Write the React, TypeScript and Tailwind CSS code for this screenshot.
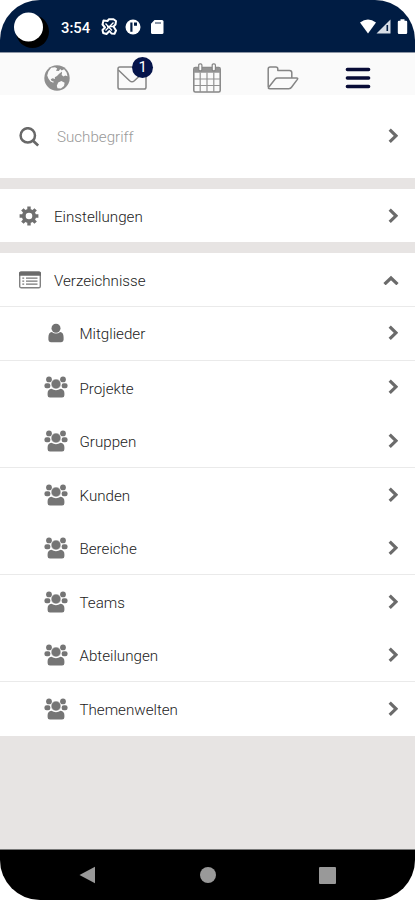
import React from "react";

type IconProps = { className?: string };

const ChevronRight = () => (
  <svg className="h-4 w-[10px] shrink-0" viewBox="0 0 10 16" fill="none" stroke="#6b6b6b" strokeWidth="3.200">
    <path d="M1.700 1.700 8 7.800l-6.300 6.100" />
  </svg>
);

const ChevronUp = () => (
  <svg className="h-[10px] w-4 shrink-0" viewBox="0 0 16 10" fill="none" stroke="#6b6b6b" strokeWidth="3.200">
    <path d="M1.500 9.200 8 3l6.500 6.200" />
  </svg>
);

const SearchIcon = ({ className }: IconProps) => (
  <svg className={className} width="20" height="20" viewBox="0 0 20 20" fill="none" stroke="#686868" strokeWidth="2.500">
    <circle cx="8.800" cy="8.400" r="7.200" />
    <path d="m13.800 13.400 5.400 5.200" strokeWidth="2.800" />
  </svg>
);

const GearIcon = ({ className }: IconProps) => (
  <svg className={className} width="20" height="20" viewBox="-10 -10 20 20" fill="none" stroke="#6f6f6f">
    <circle r="5.200" strokeWidth="3.800" />
    {[0, 45, 90, 135].map((angle) => (
      <path key={angle} d="M0-9.400v3.400M0 6v3.400" strokeWidth="3.400" transform={`rotate(${angle})`} />
    ))}
  </svg>
);

const ListIcon = ({ className }: IconProps) => (
  <svg className={className} width="22" height="18" viewBox="0 0 22 18">
    <rect x=".7" y="1.200" width="20.600" height="15.600" rx="1.600" fill="#fff" stroke="#818181" strokeWidth="1.400" />
    <path d="M0 4.700V2Q0 .5 1.500.5h19Q22 .5 22 2v2.700z" fill="#6a6a6a" />
    <path d="M3.300 7.200h1.900M3.300 10.200h1.900M3.300 13.200h1.900M7 7.200h11.500M7 10.200h11.500M7 13.200h11.500" stroke="#777" strokeWidth="1.300" />
  </svg>
);

const UserIcon = ({ className }: IconProps) => (
  <svg className={className} width="16" height="20" viewBox="0 0 16 20" fill="#727272">
    <circle cx="8" cy="5.300" r="4.500" />
    <path d="M3.800 9Q8 12.200 12.200 9 15.600 9.600 15.600 14.200v2.600q0 2.400-2.400 2.400H2.800Q.4 19.200.4 16.800v-2.600Q.4 9.600 3.800 9z" />
  </svg>
);

const GroupIcon = ({ className }: IconProps) => (
  <svg className={className} width="24" height="22" viewBox="0 0 24 22" fill="#757575">
    <circle cx="5" cy="3.400" r="2.900" />
    <circle cx="19" cy="3.400" r="2.900" />
    <rect x=".4" y="7.300" width="6" height="5" rx="2.200" />
    <rect x="17.600" y="7.300" width="6" height="5" rx="2.200" />
    <circle cx="12" cy="8" r="4.900" stroke="#fff" strokeWidth=".5" />
    <path d="M7.400 12.800Q12 15.500 16.600 12.800 20.400 13.500 20.400 17.300v2q0 2.300-2.300 2.300H5.900q-2.300 0-2.300-2.300v-2q0-3.800 3.800-4.500z" />
  </svg>
);

const GlobeIcon = () => (
  <svg className="block" width="26" height="26" viewBox="0 0 26 26">
    <circle cx="13" cy="13" r="12.700" fill="#8f8f8f" />
    <path
      d="M7.200 2.800 11 2.300l2.200 1.200-1.200 2.200 2.800.3 1.400-1.900 2.300 2.200-3.300 2.500-2.200 2.200-2.200 1.200.3 1.800-2.400-.7-2 1 1 1.800 2 .5-.4 1.200-2.800-1.400-2-2.700-1.300-3.100 1.200-4.200z"
      fill="#fafafa"
    />
    <path d="m17.500 5.500 2.600-1.200 2.500 3.100.9 3.800-2.300-.7-1.600 1-2-1.400.5-2.500z" fill="#fafafa" />
    <path d="m14.200 17.500 3.200-1.400 3.200 1.600-.6 3.400-3.100 2.400-3.400-.3-.7-2.500z" fill="#fafafa" />
  </svg>
);

const MailIcon = () => (
  <svg className="block" width="30" height="24" viewBox="0 0 30 24" fill="none" stroke="#858585" strokeWidth="1.500">
    <rect x="1" y="1" width="28" height="22" rx="1.800" />
    <path d="m1.300 4 11.300 10.700q2.400 2.200 4.800 0L28.700 4" />
  </svg>
);

const CalendarIcon = () => (
  <svg className="block" width="28" height="30" viewBox="0 0 28 30">
    <rect x=".8" y="4.500" width="26.400" height="24.500" rx="1.500" fill="#fafafa" stroke="#858585" strokeWidth="1.500" />
    <path d="M1 4.500h26v5.200H1z" fill="#949494" />
    <path d="M7.200 9.500V29M14 9.500V29M20.800 9.500V29M1 16h26M1 22.500h26" stroke="#929292" strokeWidth="1.200" />
    <g fill="#fafafa" stroke="#858585" strokeWidth="1.200">
      <rect x="5.700" y=".8" width="3.200" height="7" rx="1.300" />
      <rect x="19.200" y=".8" width="3.200" height="7" rx="1.300" />
    </g>
  </svg>
);

const FolderIcon = () => (
  <svg className="block" width="32" height="24" viewBox="0 0 32 24" fill="none" stroke="#858585" strokeWidth="1.500" strokeLinejoin="round">
    <path d="M1.200 21V3q0-2 2-2h5.600q2 0 2 2v1.500h11.700q2.300 0 2.300 2.300V12" />
    <path d="M1.500 21.500 8 13.200q1-1.200 2.700-1.200h19q1.600 0 .7 1.400L24.700 21q-1 1.700-2.900 1.700H3q-2.200 0-1.500-1.200z" />
  </svg>
);

const StatusBar = () => (
  <header className="flex h-[53px] items-start justify-between border-b border-[#8d96a5] bg-[#001c43]">
    <div className="flex items-start">
      <svg width="52" height="52" viewBox="0 0 52 52">
        <circle cx="32.500" cy="31.500" r="16.500" fill="#000" />
        <circle cx="28.500" cy="27" r="14.500" fill="#fff" />
      </svg>
      <span className="mt-[18px] ml-[9px] w-[40px] text-[14.800px] leading-5 font-medium whitespace-nowrap text-white">3:54</span>
      <svg className="mt-[18px]" width="64" height="18" viewBox="0 0 64 18">
        <path
          d="M2.500 2.500 6.500 3 8 1.200h4.500L15 3l-.5 3.500-2 2 2.500 4-1.500 3.300-3-.3-2-2.500-3 3L2.200 15l-.7-3L4 9.500 1.500 6.500z"
          fill="none"
          stroke="#fff"
          strokeWidth="2"
          strokeLinejoin="round"
        />
        <path d="m4.500 5.500 6.500 7M12.500 4.500l-8 8M6 8.500h6" stroke="#fff" strokeWidth="1.300" />
        <circle cx="32" cy="9" r="7.500" fill="#fff" />
        <path d="M29.300 4.500h2.200v9.200h-2.200zM33 4.500h3v3.300h-3z" fill="#001c43" />
        <path d="M53.500 2H61q1.500 0 1.500 1.500v11q0 1.500-1.500 1.500h-9.500Q50 16 50 14.500V5.700z" fill="#fff" />
        <path d="M54 5h6" stroke="#65738a" strokeWidth="1.500" />
      </svg>
    </div>
    <svg className="mt-[18px] mr-[6px]" width="50" height="18" viewBox="0 0 50 18">
      <path d="M1 4.500Q9 -1.700 17 4.500L9 15.500z" fill="#fff" />
      <path d="M31.500 1.500V15.500H17.500z" fill="#d8dde5" />
      <path d="M28.300 7v6" stroke="#001c43" strokeWidth="1.600" />
      <path d="M41.500 1.200h4v1.500H47q1.200 0 1.200 1.200v10.800q0 1.200-1.200 1.200h-7q-1.200 0-1.200-1.200V3.900q0-1.200 1.200-1.200h1.500z" fill="#fff" />
    </svg>
  </header>
);

const TabBar = () => (
  <nav className="grid h-[42px] grid-cols-5 items-center justify-items-center bg-[#fafafa] pt-[7px] pr-[19px] pl-[19px]">
    <GlobeIcon />
    <div className="relative pt-px">
      <MailIcon />
      <span className="absolute -top-[8px] left-[15px] flex h-[21px] w-[21px] items-center justify-center rounded-full bg-[#05144a] text-[15px] font-normal text-white">
        1
      </span>
    </div>
    <CalendarIcon />
    <FolderIcon />
    <svg className="block" width="26" height="22" viewBox="0 0 26 22" stroke="#070b36" strokeWidth="3.500" strokeLinecap="round">
      <path d="M2.400 2.500h21.200M2.400 11h21.200M2.400 19.500h21.200" />
    </svg>
  </nav>
);

const entries = [
  { label: "Mitglieder", icon: UserIcon, line: true },
  { label: "Projekte", icon: GroupIcon, line: false },
  { label: "Gruppen", icon: GroupIcon, line: true },
  { label: "Kunden", icon: GroupIcon, line: false },
  { label: "Bereiche", icon: GroupIcon, line: true },
  { label: "Teams", icon: GroupIcon, line: false },
  { label: "Abteilungen", icon: GroupIcon, line: true },
  { label: "Themenwelten", icon: GroupIcon, line: false },
];

export default function App() {
  return (
    <div className="h-[900px] w-full overflow-hidden bg-white font-['Roboto',sans-serif]">
      <div className="flex h-full flex-col overflow-hidden rounded-[40px] bg-[#e7e4e3] text-[15.150px] font-light text-[#222]">
        <StatusBar />
        <TabBar />

        {/* Search */}
        <div className="h-[83px] bg-white">
          <div className="flex h-[82px] items-center pr-[17px] pl-[19px]">
            <SearchIcon className="mt-[2px]" />
            <span className="flex-1 pt-[3px] pl-[18px] text-[#999]">Suchbegriff</span>
            <ChevronRight />
          </div>
        </div>

        <div className="mt-[11px] flex h-[53px] items-center bg-white pr-[17px] pl-[19px]">
          <GearIcon />
          <span className="flex-1 pt-[3px] pl-[15px]">Einstellungen</span>
          <ChevronRight />
        </div>

        {/* Directories */}
        <div className="mt-[11px] bg-white">
          <div className="flex h-[54px] items-center border-b border-[#eaeaea] pr-[16px] pl-[19px]">
            <ListIcon />
            <span className="flex-1 pt-[3px] pl-[13px]">Verzeichnisse</span>
            <ChevronUp />
          </div>
          <ul>
            {entries.map(({ label, icon: Icon, line }) => (
              <li
                key={label}
                className={`flex h-[53.640px] items-center pr-[17px] pl-11 ${line ? "border-b border-[#eaeaea]" : ""}`}
              >
                <span className="flex w-6 justify-center">
                  <Icon />
                </span>
                <span className="flex-1 pt-[3px] pl-[11.500px]">{label}</span>
                <ChevronRight />
              </li>
            ))}
          </ul>
        </div>

        {/* System navigation */}
        <footer className="mt-auto grid h-[51px] grid-cols-3 items-center justify-items-center border-t border-[#777] bg-black px-7">
          <svg width="17" height="18" viewBox="0 0 17 18" fill="#999">
            <path d="M.5 9 16 .8v16.400z" />
          </svg>
          <span className="ml-px h-4 w-4 rounded-full bg-[#999]" />
          <span className="h-[17px] w-[17px] rounded-[1px] bg-[#999]" />
        </footer>
      </div>
    </div>
  );
}
